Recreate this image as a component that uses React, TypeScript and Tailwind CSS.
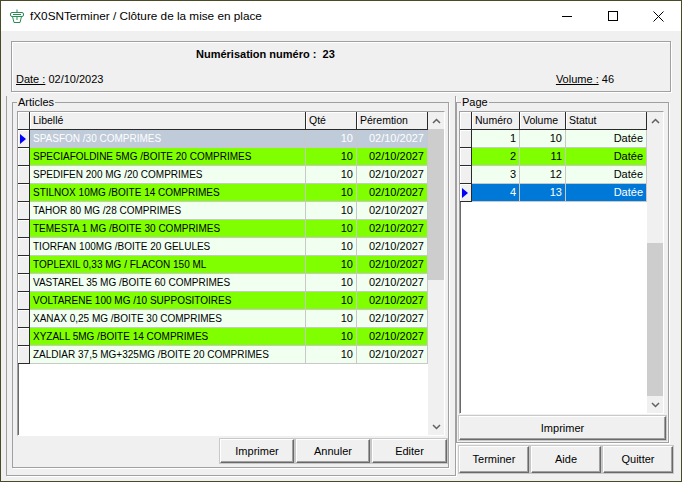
import type { ReactNode } from 'react'

type Tone = 'sel' | 'g' | 'w' | 'blue'

const articles: Array<{ label: string; tone: Tone }> = [
  { label: 'SPASFON /30 COMPRIMES', tone: 'sel' },
  { label: 'SPECIAFOLDINE 5MG /BOITE 20 COMPRIMES', tone: 'g' },
  { label: 'SPEDIFEN 200 MG /20 COMPRIMES', tone: 'w' },
  { label: 'STILNOX 10MG /BOITE 14 COMPRIMES', tone: 'g' },
  { label: 'TAHOR 80 MG /28 COMPRIMES', tone: 'w' },
  { label: 'TEMESTA 1 MG /BOITE 30 COMPRIMES', tone: 'g' },
  { label: 'TIORFAN 100MG /BOITE 20 GELULES', tone: 'w' },
  { label: 'TOPLEXIL 0,33 MG / FLACON 150 ML', tone: 'g' },
  { label: 'VASTAREL 35 MG /BOITE 60 COMPRIMES', tone: 'w' },
  { label: 'VOLTARENE 100 MG /10 SUPPOSITOIRES', tone: 'g' },
  { label: 'XANAX 0,25 MG /BOITE 30 COMPRIMES', tone: 'w' },
  { label: 'XYZALL 5MG /BOITE 14 COMPRIMES', tone: 'g' },
  { label: 'ZALDIAR 37,5 MG+325MG /BOITE 20 COMPRIMES', tone: 'w' },
]

const pages: Array<{ num: number; vol: number; tone: Tone }> = [
  { num: 1, vol: 10, tone: 'w' },
  { num: 2, vol: 11, tone: 'g' },
  { num: 3, vol: 12, tone: 'w' },
  { num: 4, vol: 13, tone: 'blue' },
]

const toneClass: Record<Tone, string> = {
  sel: 'bg-[#bfcbd8] text-white',
  g: 'bg-[#80ff00] text-black',
  w: 'bg-[#f0fff0] text-black',
  blue: 'bg-[#0078d7] text-white',
}

function Chevron({ down }: { down?: boolean }) {
  return (
    <svg width="9" height="6" viewBox="0 0 9 6">
      <polyline
        points={down ? '1,1 4.5,4.5 8,1' : '1,5 4.5,1.5 8,5'}
        fill="none"
        stroke="#606060"
        strokeWidth="1.5"
      />
    </svg>
  )
}

function Scrollbar({ thumbTop, thumbHeight }: { thumbTop: number; thumbHeight: number }) {
  return (
    <div className="flex w-[16px] flex-col bg-[#f0f0f0]">
      <div className="flex h-[17px] items-center justify-center">
        <Chevron />
      </div>
      <div className="flex flex-1 flex-col">
        <div className="bg-[#cdcdcd]" style={{ marginTop: thumbTop, height: thumbHeight }} />
      </div>
      <div className="flex h-[17px] items-center justify-center">
        <Chevron down />
      </div>
    </div>
  )
}

function Indicator({ active, header }: { active?: boolean; header?: boolean }) {
  return (
    <div
      className={`flex w-[12px] shrink-0 items-center border-r border-b border-[#2a2a2a] bg-[#f0f0f0] shadow-[inset_1px_1px_0_#fff] ${header ? 'h-[18px]' : 'h-[18px]'}`}
    >
      {active && (
        <svg width="6" height="10" viewBox="0 0 6 10" className="ml-[2px]">
          <polygon points="0,0 6,5 0,10" fill="#0000ff" />
        </svg>
      )}
    </div>
  )
}

function HeadCell({ w, children }: { w: number; children: ReactNode }) {
  return (
    <div
      className="flex h-[18px] shrink-0 items-center border-r border-b border-[#2a2a2a] bg-[#f0f0f0] pl-[3px] text-[10.5px] shadow-[inset_1px_1px_0_#fff]"
      style={{ width: w }}
    >
      {children}
    </div>
  )
}

function Cell({ w, right, small, children }: { w: number; right?: boolean; small?: boolean; children: ReactNode }) {
  return (
    <div
      className={`flex h-[18px] shrink-0 items-center overflow-hidden whitespace-nowrap border-r border-b border-[#c8c8c8] ${right ? 'justify-end pr-[3px]' : 'pl-[3px]'} ${small ? 'text-[10px]' : 'text-[11px]'}`}
      style={{ width: w }}
    >
      {children}
    </div>
  )
}

function Btn({ w, h = 24, children }: { w: number; h?: number; children: ReactNode }) {
  return (
    <button
      type="button"
      className="flex shrink-0 items-center justify-center border border-t-white border-l-white border-r-[#696969] border-b-[#696969] bg-[#f0f0f0] text-[11px] text-black shadow-[inset_-1px_-1px_0_#a0a0a0,0_0_0_1px_#c8c8c8]"
      style={{ width: w, height: h }}
    >
      {children}
    </button>
  )
}

export default function App() {
  return (
    <div
      className="flex h-[482px] w-[682px] flex-col overflow-hidden border border-[#4a4a26] bg-[#f0f0f0] text-black"
      style={{ fontFamily: '"Liberation Sans", Arial, sans-serif' }}
    >
      <div className="flex h-[30px] shrink-0 items-center bg-white">
        <svg width="16" height="16" viewBox="0 0 16 16" className="ml-[8px]">
          <g fill="none" stroke="#2e8b57" strokeWidth="1">
            <path d="M8 1.5 V4.5" />
            <rect x="1.5" y="4.5" width="13" height="4" rx="1.5" />
            <path d="M4 6.5 H12" />
            <path d="M3.5 8.5 L5 14.5 H11 L12.5 8.5" />
            <path d="M8 8.5 V12" />
          </g>
        </svg>
        <span className="ml-[5px] text-[11.75px]">fX0SNTerminer / Clôture de la mise en place</span>
        <div className="ml-auto flex h-full">
          <div className="flex w-[46px] items-center justify-center">
            <div className="h-px w-[10px] bg-black" />
          </div>
          <div className="flex w-[46px] items-center justify-center">
            <div className="h-[10px] w-[10px] border border-black" />
          </div>
          <div className="flex w-[45px] items-center justify-center">
            <svg width="11" height="11" viewBox="0 0 11 11">
              <path d="M0.5 0.5 L10.5 10.5 M10.5 0.5 L0.5 10.5" stroke="#000" strokeWidth="1" />
            </svg>
          </div>
        </div>
      </div>

      <div className="flex flex-1 flex-col">
        <div className="ml-[10px] mt-[10px] h-[51px] w-[660px] border border-[#a0a0a0] shadow-[1px_1px_0_#fff,inset_1px_1px_0_#fff]">
          <div className="mt-[4px] pl-[184px] text-[11px] font-bold">
            Numérisation numéro :&nbsp; 23
          </div>
          <div className="mt-[8px] flex text-[11px]">
            <span className="ml-[4px]">
              <span className="underline">Date :</span> 02/10/2023
            </span>
            <span className="ml-auto mr-[56px]">
              <span className="underline">Volume :</span> 46
            </span>
          </div>
        </div>

        <div className="mt-[4px] flex">
          <div className="ml-[5px] border-l border-r border-b border-[#a0a0a0] pb-[7px] pl-[5px] pr-[6px] shadow-[1px_1px_0_#fff]">
            <fieldset className="h-[372px] w-[437px] border border-[#a0a0a0] pl-[4px] shadow-[1px_1px_0_#fff]">
              <legend className="px-[1px] text-[11px] leading-[13px]">Articles</legend>
              <div className="mt-[2px] flex h-[325px] w-[428px] border border-t-[#a0a0a0] border-l-[#a0a0a0] border-r-white border-b-white bg-white shadow-[inset_1px_1px_0_#696969]">
                <div className="flex flex-1 flex-col">
                  <div className="flex">
                    <Indicator header />
                    <HeadCell w={276}>Libellé</HeadCell>
                    <HeadCell w={51}>Qté</HeadCell>
                    <HeadCell w={71}>Péremtion</HeadCell>
                  </div>
                  {articles.map((a, i) => (
                    <div key={i} className="flex">
                      <Indicator active={i === 0} />
                      <div className={`flex ${toneClass[a.tone]}`}>
                        <Cell w={276} small>{a.label}</Cell>
                        <Cell w={51} right>10</Cell>
                        <Cell w={71} right>02/10/2027</Cell>
                      </div>
                    </div>
                  ))}
                </div>
                <Scrollbar thumbTop={0} thumbHeight={151} />
              </div>
              <div className="mr-[1px] mt-[3px] flex justify-end gap-[2px]">
                <Btn w={74}>Imprimer</Btn>
                <Btn w={74}>Annuler</Btn>
                <Btn w={75}>Editer</Btn>
              </div>
            </fieldset>
          </div>

          <div className="flex flex-col">
            <fieldset className="h-[347px] w-[213px] border border-[#a0a0a0] pl-[2px] shadow-[1px_1px_0_#fff]">
              <legend className="ml-[2px] px-[1px] text-[11px] leading-[13px]">Page</legend>
              <div className="mt-[2px] flex h-[303px] w-[205px] border border-t-[#a0a0a0] border-l-[#a0a0a0] border-r-white border-b-white bg-white shadow-[inset_1px_1px_0_#696969]">
                <div className="flex flex-1 flex-col">
                  <div className="flex">
                    <Indicator header />
                    <HeadCell w={48}>Numéro</HeadCell>
                    <HeadCell w={46}>Volume</HeadCell>
                    <HeadCell w={81}>Statut</HeadCell>
                  </div>
                  {pages.map((p) => (
                    <div key={p.num} className="flex">
                      <Indicator active={p.tone === 'blue'} />
                      <div className={`flex ${toneClass[p.tone]}`}>
                        <Cell w={48} right>{p.num}</Cell>
                        <Cell w={46} right>{p.vol}</Cell>
                        <Cell w={81} right>Datée</Cell>
                      </div>
                    </div>
                  ))}
                </div>
                <Scrollbar thumbTop={114} thumbHeight={153} />
              </div>
              <div className="mt-[2px] flex">
                <Btn w={207}>Imprimer</Btn>
              </div>
            </fieldset>
            <div className="ml-[3px] mt-[3px] flex gap-[2px]">
              <Btn w={70} h={27}>Terminer</Btn>
              <Btn w={70} h={27}>Aide</Btn>
              <Btn w={70} h={27}>Quitter</Btn>
            </div>
          </div>
        </div>
      </div>
    </div>
  )
}
